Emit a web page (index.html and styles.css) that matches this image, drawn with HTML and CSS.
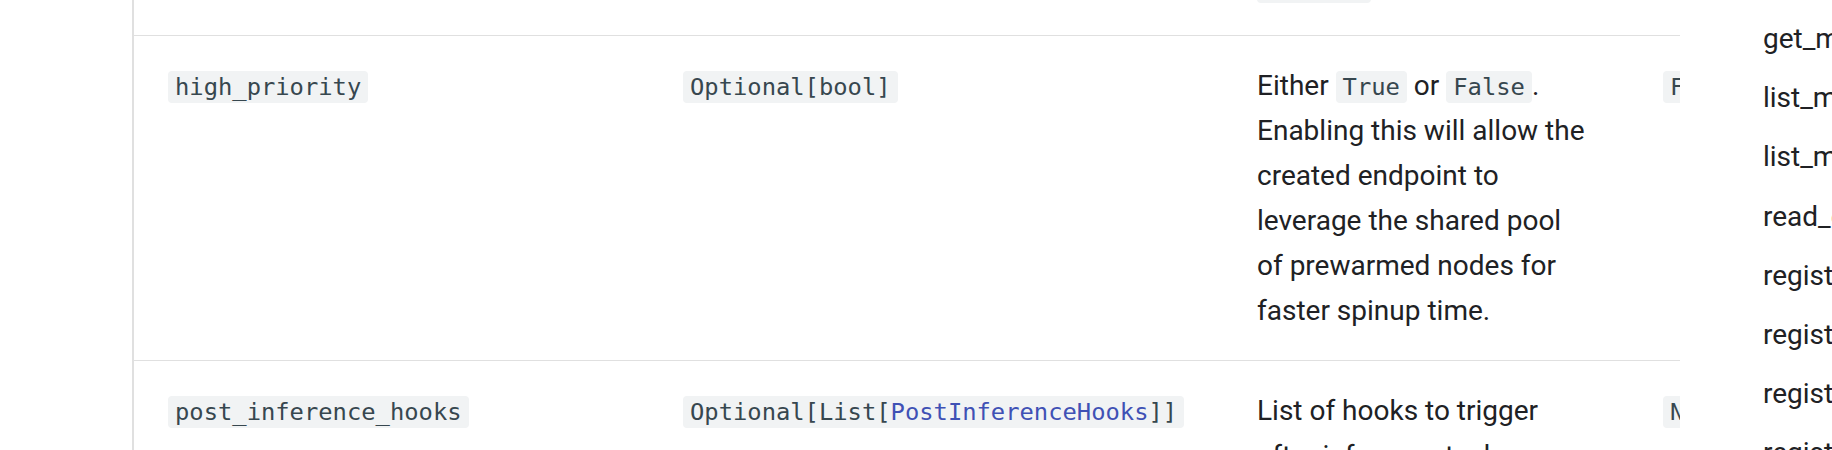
FILE: index.html
```html
<!DOCTYPE html>
<html lang="en">
<head>
<meta charset="utf-8">
<title>create_model_endpoint parameters</title>
<link rel="stylesheet" href="styles.css">
</head>
<body>
<div class="page">
  <main class="content">
    <div class="params">
      <div class="row">
        <div class="cell"><code>endpoint_type</code></div>
        <div class="cell"><code>str</code></div>
        <div class="cell desc">Must be either <code>"sync"</code> or <code>"async"</code>.</div>
        <div class="cell"><code>'sync'</code></div>
      </div>
      <div class="row">
        <div class="cell"><code>high_priority</code></div>
        <div class="cell"><code>Optional[bool]</code></div>
        <div class="cell desc">Either <code>True</code> or <code>False</code>. Enabling this will allow the created endpoint to leverage the shared pool of prewarmed nodes for faster spinup time.</div>
        <div class="cell"><code>False</code></div>
      </div>
      <div class="row">
        <div class="cell"><code>post_inference_hooks</code></div>
        <div class="cell"><code>Optional[List[<a class="ref" href="#">PostInferenceHooks</a>]]</code></div>
        <div class="cell desc">List of hooks to trigger after inference tasks are served.</div>
        <div class="cell"><code>None</code></div>
      </div>
    </div>
  </main>
  <aside class="toc">
    <a href="#">get_model_endpoint</a>
    <a href="#">list_model_bundles</a>
    <a href="#">list_model_endpoints</a>
    <a href="#">read_endpoint_creation_logs</a>
    <a href="#">register_batch_csv_location_fn</a>
    <a href="#">register_bundle_location_fn</a>
    <a href="#">register_endpoint_auth_decorator</a>
    <a href="#">register_model_bundle_location_fn</a>
  </aside>
</div>
</body>
</html>
```

FILE: styles.css
```css
html, body {
  margin: 0;
  padding: 0;
  overflow: hidden;
  background: #ffffff;
}

.page {
  display: flex;
  height: 450px;
  font-family: Roboto, "Noto Sans", sans-serif;
  font-size: 28px;
  line-height: 45px;
  color: #202124;
}

.content {
  flex: none;
  width: 1680px;
  box-sizing: border-box;
  padding-left: 132px;
  overflow: hidden;
}

.params {
  width: max-content;
  margin-top: -109px;
  border-left: 2px solid #e0e0e0;
}

.row {
  display: grid;
  grid-template-columns: 515px 574px 406px 300px;
  padding: 27px 0 27px 34px;
  border-bottom: 1px solid #e0e0e0;
}

.desc {
  padding-right: 73px;
}

code {
  font-family: "DejaVu Sans Mono", "Liberation Mono", monospace;
  font-size: 23.8px;
  line-height: 1;
  color: #37474f;
  background: #f1f3f4;
  padding: 2px 7px;
  border-radius: 4px;
}

.ref {
  color: #3f51b5;
  text-decoration: none;
}

.toc {
  flex: 1;
  padding: 9px 0 0 83px;
  white-space: nowrap;
  overflow: hidden;
}

.toc a {
  display: block;
  line-height: 59.2px;
  color: #202124;
  text-decoration: none;
}
```
